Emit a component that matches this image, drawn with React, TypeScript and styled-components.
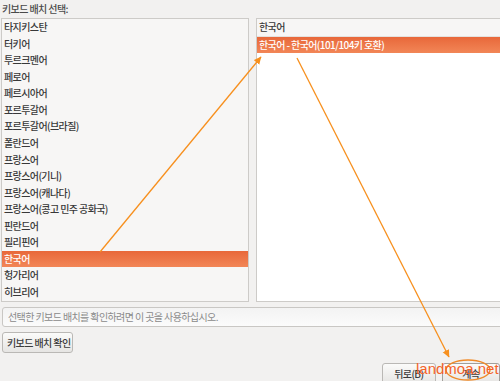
import React from "react";
import styled, {createGlobalStyle} from "styled-components";

const GlobalStyle = createGlobalStyle`
    html, body {
        margin: 0;
        padding: 0;
        background: #f2f1f0;
    }
    body {
        font-family: "Noto Sans CJK KR", "Noto Sans", sans-serif;
        color: #3c3c3c;
    }
`;

const Page = styled.div`
    position: relative;
    width: 500px;
    height: 381px;
    overflow: hidden;
    background: #f2f1f0;
    font-size: 10px;
    font-weight: 500;
    letter-spacing: -0.6px;
`;

const Caption = styled.div`
    height: 18px;
    line-height: 18px;
    padding-left: 2px;
    color: #4a4a4a;
`;

const Panes = styled.div`
    display: flex;
    gap: 7px;
    margin-left: 1px;
    height: 284px;
    width: 520px;
`;

const ListBox = styled.div<{$width: number; $bg: string}>`
    box-sizing: border-box;
    width: ${p => p.$width}px;
    height: 100%;
    border: 1px solid #cdcbc8;
    background: ${p => p.$bg};
    overflow: hidden;
`;

const Row = styled.div<{$selected?: boolean}>`
    height: 16.57px;
    line-height: 16.57px;
    padding-left: 2px;
    white-space: nowrap;
    color: ${p => p.$selected ? "#ffffff" : "#383838"};
    background: ${p => p.$selected ? "linear-gradient(#e8683a, #f28657)" : "transparent"};
`;

const HeaderRow = styled(Row)`
    background: #f7f6f5;
    border-bottom: 1px solid #e4e2df;
`;

const Entry = styled.div`
    box-sizing: border-box;
    margin: 5px 0 0 2px;
    width: 520px;
    height: 20px;
    line-height: 18px;
    padding-left: 5px;
    border: 1px solid #c9c7c4;
    border-radius: 3px;
    background: linear-gradient(#f3f3f3, #fbfbfb);
    color: #8a8a8a;
    font-weight: 400;
`;

const Button = styled.div<{$default?: boolean}>`
    box-sizing: border-box;
    height: 21px;
    line-height: 19px;
    padding: 0 4px;
    border: 1px solid ${p => p.$default ? "#a19f9b" : "#bab8b5"};
    border-radius: 3px;
    background: linear-gradient(#fbfbfa, #e6e5e3);
    color: #3c3c3c;
    text-align: center;
    white-space: nowrap;
`;

const CheckRow = styled.div`
    display: flex;
    margin: 5px 0 0 2px;
`;

const Actions = styled.div`
    display: flex;
    gap: 6px;
    margin: 10px 0 0 382px;
`;

const Overlay = styled.svg`
    position: absolute;
    left: 0;
    top: 0;
    pointer-events: none;
`;

const Watermark = styled.div`
    position: absolute;
    left: 416px;
    top: 360px;
    font-family: "Liberation Sans", Arial, sans-serif;
    font-size: 15px;
    font-weight: 400;
    letter-spacing: 0;
    color: #f4632a;
`;

const layouts = [
    "타지키스탄",
    "터키어",
    "투르크멘어",
    "페로어",
    "페르시아어",
    "포르투갈어",
    "포르투갈어(브라질)",
    "폴란드어",
    "프랑스어",
    "프랑스어(기니)",
    "프랑스어(캐나다)",
    "프랑스어(콩고 민주 공화국)",
    "핀란드어",
    "필리핀어",
    "한국어",
    "헝가리어",
    "히브리어",
];

export default function App() {
    return (
        <Page>
            <GlobalStyle/>
            <Caption>키보드 배치 선택:</Caption>
            <Panes>
                <ListBox $width={248} $bg="#f7f6f5">
                    {layouts.map(name => (
                        <Row key={name} $selected={name === "한국어"}>{name}</Row>
                    ))}
                </ListBox>
                <ListBox $width={264} $bg="#ffffff">
                    <HeaderRow>한국어</HeaderRow>
                    <Row $selected>한국어 - 한국어(101/104키 호환)</Row>
                </ListBox>
            </Panes>
            <Entry>선택한 키보드 배치를 확인하려면 이 곳을 사용하십시오.</Entry>
            <CheckRow>
                <Button style={{width: 71}}>키보드 배치 확인</Button>
            </CheckRow>
            <Actions>
                <Button style={{width: 55}}>뒤로(B)</Button>
                <Button $default style={{width: 60}}>계속</Button>
            </Actions>

            <Overlay width="500" height="381" viewBox="0 0 500 381">
                <defs>
                    <marker id="head" markerWidth="8" markerHeight="8" refX="7" refY="4" orient="auto" markerUnits="userSpaceOnUse">
                        <path d="M0,0.5 L7.5,4 L0,7.5 Z" fill="#f7901e"/>
                    </marker>
                </defs>
                <line x1="100" y1="252" x2="261" y2="57" stroke="#f7901e" strokeWidth="1.3" markerEnd="url(#head)"/>
                <line x1="297" y1="58" x2="449" y2="357" stroke="#f7901e" strokeWidth="1.3" markerEnd="url(#head)"/>
                <ellipse cx="468" cy="370" rx="22" ry="10" fill="none" stroke="#f08a28" strokeWidth="1.4"/>
            </Overlay>
            <Watermark>landmoa.net</Watermark>
        </Page>
    );
}
